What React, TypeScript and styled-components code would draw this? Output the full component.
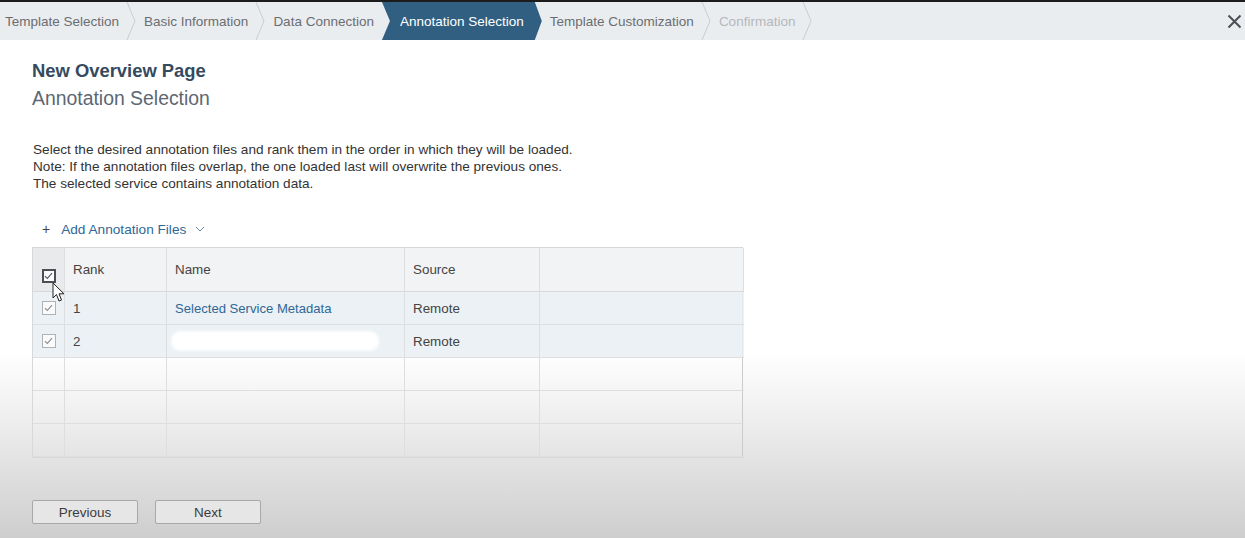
import React from 'react'
import styled, { createGlobalStyle } from 'styled-components'

const GlobalStyle = createGlobalStyle`
  html, body {
    margin: 0;
    padding: 0;
    height: 100%;
  }
  body {
    font-family: 'Liberation Sans', Arial, sans-serif;
    color: #333;
  }
`

const Page = styled.div`
  min-height: 538px;
  height: 100vh;
  border-top: 2px solid #1c1c1c;
  box-sizing: border-box;
  display: flex;
  flex-direction: column;
  background: linear-gradient(
    to bottom,
    #ffffff 0px,
    #ffffff 350px,
    #ebebeb 430px,
    #cdcdcd 538px
  );
`

const StepBar = styled.div`
  height: 38px;
  background: #eaedf0;
  display: flex;
  align-items: stretch;
  padding-left: 5px;
`

const Step = styled.div<{ $muted?: boolean }>`
  display: flex;
  align-items: center;
  font-size: 13.5px;
  color: ${({ $muted }) => ($muted ? '#b4b8bc' : '#6a6d70')};
  white-space: nowrap;
`

const ActiveStep = styled.div`
  display: flex;
  align-items: center;
  font-size: 13.5px;
  color: #ffffff;
  background: #315f82;
  padding: 0 18px 0 18px;
  margin: 0 8px;
  white-space: nowrap;
  clip-path: polygon(0 0, calc(100% - 7px) 0, 100% 50%, calc(100% - 7px) 100%, 0 100%, 8px 50%);
`

const SepWrap = styled.div`
  width: 10px;
  margin: 0 8px 0 7px;
  display: flex;
`

const Close = styled.button`
  margin-left: auto;
  width: 18px;
  border: none;
  background: transparent;
  display: flex;
  align-items: center;
  justify-content: flex-start;
  padding: 0;
  cursor: pointer;
`

const Content = styled.div`
  padding: 20px 32px 0 32px;
  flex: 1;
  display: flex;
  flex-direction: column;
`

const Title = styled.h1`
  margin: 0;
  font-size: 18.4px;
  font-weight: bold;
  color: #354a5f;
  line-height: 22px;
`

const Subtitle = styled.h2`
  margin: 4px 0 0 0;
  font-size: 19.4px;
  font-weight: normal;
  color: #5c6772;
  line-height: 24px;
`

const Description = styled.p`
  margin: 31px 0 0 1px;
  font-size: 13.6px;
  line-height: 17px;
  color: #333;
`

const AddLink = styled.button`
  margin: 29px 0 0 10px;
  align-self: flex-start;
  background: transparent;
  border: none;
  padding: 0;
  font-family: inherit;
  font-size: 13.65px;
  color: #2f6897;
  display: flex;
  align-items: center;
  cursor: pointer;
`

const Plus = styled.span`
  color: #444;
  font-size: 14px;
  margin-right: 11px;
`

const Table = styled.div`
  margin-top: 10px;
  width: 711px;
  display: grid;
  grid-template-columns: 32px 102px 238px 135px 204px;
  border: 1px solid #d6d8da;
  border-right-color: #c9cbcd;
  box-sizing: border-box;
  position: relative;
`

const HeadCell = styled.div<{ $select?: boolean }>`
  height: 44px;
  display: flex;
  align-items: center;
  justify-content: ${({ $select }) => ($select ? 'center' : 'flex-start')};
  padding-left: ${({ $select }) => ($select ? '0' : '8px')};
  padding-top: ${({ $select }) => ($select ? '12px' : '0')};
  box-sizing: border-box;
  font-size: 13.4px;
  color: #444;
  background: ${({ $select }) => ($select ? '#e8eaec' : '#f2f3f4')};
  border-right: 1px solid #dcdee0;
  border-bottom: 1px solid #d6d8da;
  &:last-child {
    border-right: none;
  }
`

const Cell = styled.div<{ $selected?: boolean; $select?: boolean; $last?: boolean }>`
  height: 33px;
  display: flex;
  align-items: center;
  justify-content: ${({ $select }) => ($select ? 'center' : 'flex-start')};
  padding-left: ${({ $select }) => ($select ? '0' : '8px')};
  box-sizing: border-box;
  font-size: 13.4px;
  color: #444;
  background: ${({ $selected }) => ($selected ? 'rgba(232, 238, 243, 0.85)' : 'transparent')};
  border-right: ${({ $last }) => ($last ? 'none' : '1px solid #dcdee0')};
  border-bottom: 1px solid #dcdee0;
`

const LinkText = styled.a`
  font-size: 13.1px;
  color: #2f6897;
  text-decoration: none;
`

const Redacted = styled.span`
  display: block;
  width: 204px;
  height: 16px;
  margin-left: -2px;
  background: #ffffff;
  border-radius: 7px;
  box-shadow: 0 0 3px 2px rgba(255, 255, 255, 0.9);
`

const Box = styled.span<{ $focus?: boolean }>`
  width: 14px;
  height: 14px;
  box-sizing: border-box;
  border: ${({ $focus }) => ($focus ? '2px solid #4a4f55' : '1px solid #aeb2b6')};
  background: #fbfbfb;
  display: flex;
  align-items: center;
  justify-content: center;
`

const Cursor = styled.svg`
  position: absolute;
  left: 19px;
  top: 34px;
  pointer-events: none;
`

const Footer = styled.div`
  margin-top: auto;
  padding-bottom: 14px;
  display: flex;
  gap: 17px;
`

const Button = styled.button`
  width: 106px;
  height: 24px;
  border: 1px solid #a8a8a8;
  border-radius: 2px;
  background: #e6e6e6;
  font-family: inherit;
  font-size: 13.5px;
  color: #3c3c3c;
  cursor: pointer;
`

const Separator = () => (
  <SepWrap>
    <svg width="10" height="38" viewBox="0 0 10 38">
      <polyline points="1,0 9,19 1,38" fill="none" stroke="#c9ccd0" strokeWidth="1" />
    </svg>
  </SepWrap>
)

const Check = ({ focus }: { focus?: boolean }) => (
  <Box $focus={focus}>
    <svg width="9" height="8" viewBox="0 0 9 8">
      <polyline
        points="1,4.2 3.4,6.5 8,1.2"
        fill="none"
        stroke={focus ? '#55606a' : '#8a9298'}
        strokeWidth="1.2"
      />
    </svg>
  </Box>
)

const rows = [
  { rank: '1', name: 'Selected Service Metadata', source: 'Remote' },
  { rank: '2', name: '', source: 'Remote' }
]

export default function App() {
  return (
    <>
      <GlobalStyle />
      <Page>
        <StepBar>
          <Step>Template Selection</Step>
          <Separator />
          <Step>Basic Information</Step>
          <Separator />
          <Step>Data Connection</Step>
          <ActiveStep>Annotation Selection</ActiveStep>
          <Step>Template Customization</Step>
          <Separator />
          <Step $muted>Confirmation</Step>
          <Separator />
          <Close aria-label="Close">
            <svg width="15" height="15" viewBox="0 0 15 15">
              <path d="M1.5 1.5 L13.5 13.5 M13.5 1.5 L1.5 13.5" stroke="#4b4f54" strokeWidth="2" />
            </svg>
          </Close>
        </StepBar>
        <Content>
          <Title>New Overview Page</Title>
          <Subtitle>Annotation Selection</Subtitle>
          <Description>
            Select the desired annotation files and rank them in the order in which they will be loaded.
            <br />
            Note: If the annotation files overlap, the one loaded last will overwrite the previous ones.
            <br />
            The selected service contains annotation data.
          </Description>
          <AddLink>
            <Plus>+</Plus>
            Add Annotation Files
            <svg width="10" height="6" viewBox="0 0 10 6" style={{ marginLeft: 9 }}>
              <polyline points="1,1 5,5 9,1" fill="none" stroke="#6b8aa8" strokeWidth="1" />
            </svg>
          </AddLink>
          <Table>
            <HeadCell $select>
              <Check focus />
            </HeadCell>
            <HeadCell>Rank</HeadCell>
            <HeadCell>Name</HeadCell>
            <HeadCell>Source</HeadCell>
            <HeadCell />
            {rows.map((r) => (
              <React.Fragment key={r.rank}>
                <Cell $selected $select>
                  <Check />
                </Cell>
                <Cell $selected>{r.rank}</Cell>
                <Cell $selected>
                  {r.name ? <LinkText href="#">{r.name}</LinkText> : <Redacted />}
                </Cell>
                <Cell $selected>{r.source}</Cell>
                <Cell $selected $last />
              </React.Fragment>
            ))}
            {[0, 1, 2].map((i) => (
              <React.Fragment key={i}>
                <Cell $select />
                <Cell />
                <Cell />
                <Cell />
                <Cell $last />
              </React.Fragment>
            ))}
            <Cursor width="13" height="21" viewBox="0 0 13 21">
              <path
                d="M1 1 L1 16 L4.5 12.5 L7 19 L9.5 18 L7 11.8 L12 11.8 Z"
                fill="#ffffff"
                stroke="#222"
                strokeWidth="1"
                strokeLinejoin="round"
              />
            </Cursor>
          </Table>
          <Footer>
            <Button>Previous</Button>
            <Button>Next</Button>
          </Footer>
        </Content>
      </Page>
    </>
  )
}
